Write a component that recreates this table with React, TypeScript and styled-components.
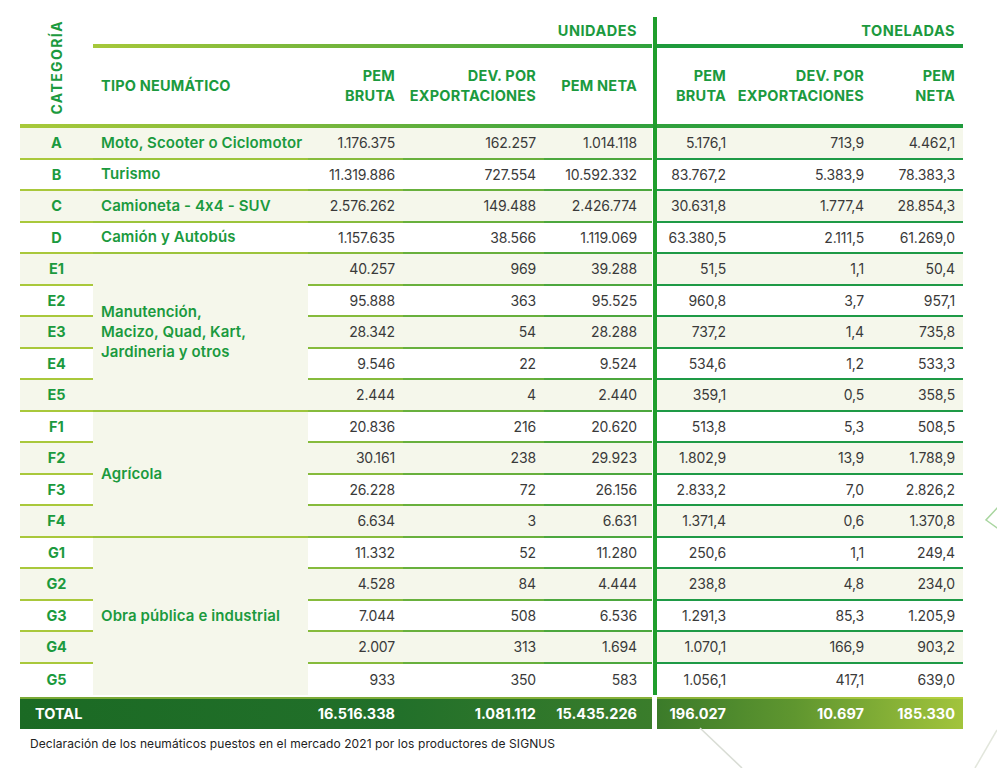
import React from 'react';
import styled, { createGlobalStyle } from 'styled-components';

const GREEN = '#1b9a3e';
const CREAM = '#f5f7eb';
const LINE: Record<number, string> = {
  1: '#a9c83b',
  2: '#9cc43b',
  3: '#86bb3c',
  4: '#68b03d',
  5: '#4ca73e',
  7: '#1e9a46',
  8: '#1e9a46',
  9: '#1e9a46',
};

const Global = createGlobalStyle`
  html, body { margin: 0; padding: 0; background: #fff; }
  body { font-family: Inter, "Noto Sans", "Liberation Sans", sans-serif; }
`;

const Page = styled.div`
  position: relative;
  width: 997px;
  height: 768px;
  overflow: hidden;
  box-sizing: border-box;
  padding: 17px 0 0 20px;
`;

const Deco = styled.svg`
  position: absolute;
  left: 0;
  top: 0;
  pointer-events: none;
`;

const Table = styled.div`
  position: relative;
  display: grid;
  width: 943px;
  grid-template-columns: 73px 215px 95px 141px 108px 5px 77px 138px 91px;
  grid-template-rows: 27px 4px 76px 4px repeat(18, 31.5px) 34px;
`;

const GroupHead = styled.div<{ $cols: string; $pad: number }>`
  grid-row: 1;
  grid-column: ${(p) => p.$cols};
  display: flex;
  align-items: center;
  justify-content: flex-end;
  padding-right: ${(p) => p.$pad}px;
  color: ${GREEN};
  font-weight: 700;
  font-size: 14.5px;
  letter-spacing: 0.5px;
`;

const TopLine = styled.div<{ $cols: string; $gradient: boolean }>`
  grid-row: 2;
  grid-column: ${(p) => p.$cols};
  background: ${(p) =>
    p.$gradient ? 'linear-gradient(to right, #a6c83a, #6cb23c 50%, #2fa23d)' : '#1e9a3c'};
`;

const CatHead = styled.div`
  grid-row: 1 / 4;
  grid-column: 1;
  display: flex;
  align-items: flex-start;
  justify-content: center;
  padding-top: 3px;
  span {
    writing-mode: vertical-rl;
    transform: rotate(180deg);
    color: ${GREEN};
    font-weight: 700;
    font-size: 14px;
    letter-spacing: 1.4px;
  }
`;

const ColHead = styled.div<{ $col: number; $pad: number; $left?: boolean }>`
  grid-row: 3;
  grid-column: ${(p) => p.$col};
  display: flex;
  align-items: center;
  justify-content: ${(p) => (p.$left ? 'flex-start' : 'flex-end')};
  text-align: ${(p) => (p.$left ? 'left' : 'right')};
  padding: ${(p) => (p.$left ? `0 0 0 ${p.$pad}px` : `0 ${p.$pad}px 0 0`)};
  color: ${GREEN};
  font-weight: 700;
  font-size: 14.5px;
  letter-spacing: 0.2px;
  line-height: 20px;
  white-space: nowrap;
`;

const HeadRule = styled.div`
  grid-row: 4;
  grid-column: 1 / -1;
  background: linear-gradient(to right, #a8c93a 0%, #7cb83c 30%, #34a23d 62%, #1e9a3c 100%);
`;

const Divider = styled.div`
  grid-row: 1 / 23;
  grid-column: 6;
  justify-self: center;
  width: 4px;
  background: #1f9e2c;
  z-index: 2;
`;

const Cell = styled.div<{ $row: number; $col: number; $span?: number; $alt: boolean; $last: boolean }>`
  grid-row: ${(p) => p.$row} / span ${(p) => p.$span || 1};
  grid-column: ${(p) => p.$col};
  box-sizing: border-box;
  display: flex;
  align-items: center;
  background: ${(p) => (p.$alt ? CREAM : '#fff')};
  border-bottom: ${(p) => (p.$last ? 'none' : `2px solid ${LINE[p.$col]}`)};
`;

const CatCell = styled(Cell)`
  justify-content: center;
  color: ${GREEN};
  font-weight: 700;
  font-size: 14.5px;
`;

const TipoCell = styled(Cell)`
  padding-left: 8px;
  color: ${GREEN};
  font-weight: 600;
  font-size: 15px;
  line-height: 20px;
  letter-spacing: 0.1px;
  white-space: nowrap;
`;

const NumCell = styled(Cell)<{ $pad: number }>`
  justify-content: flex-end;
  padding-right: ${(p) => p.$pad}px;
  color: #3a3a3a;
  font-size: 14px;
  letter-spacing: -0.15px;
`;

const TotalBand = styled.div<{ $cols: string; $template: string; $bg: string }>`
  grid-row: 23;
  grid-column: ${(p) => p.$cols};
  margin-top: 2px;
  display: grid;
  grid-template-columns: ${(p) => p.$template};
  align-items: center;
  background: ${(p) => p.$bg};
  box-shadow: inset 0 2px 0 rgba(200, 220, 70, 0.55);
  color: #fff;
  font-weight: 700;
  font-size: 14.5px;
`;

const TotalCell = styled.div<{ $pad: number; $left?: boolean }>`
  text-align: ${(p) => (p.$left ? 'left' : 'right')};
  padding: ${(p) => (p.$left ? `0 0 0 ${p.$pad}px` : `0 ${p.$pad}px 0 0`)};
`;

const Footer = styled.div`
  margin-top: 8px;
  padding-left: 10px;
  font-size: 12px;
  line-height: 14px;
  color: #222;
  letter-spacing: 0.08px;
`;

type Row = [string, string, string, string, string, string, string, string];

const rows: Row[] = [
  ['A', '1.176.375', '162.257', '1.014.118', '5.176,1', '713,9', '4.462,1', 'Moto, Scooter o Ciclomotor'],
  ['B', '11.319.886', '727.554', '10.592.332', '83.767,2', '5.383,9', '78.383,3', 'Turismo'],
  ['C', '2.576.262', '149.488', '2.426.774', '30.631,8', '1.777,4', '28.854,3', 'Camioneta - 4x4 - SUV'],
  ['D', '1.157.635', '38.566', '1.119.069', '63.380,5', '2.111,5', '61.269,0', 'Camión y Autobús'],
  ['E1', '40.257', '969', '39.288', '51,5', '1,1', '50,4', ''],
  ['E2', '95.888', '363', '95.525', '960,8', '3,7', '957,1', ''],
  ['E3', '28.342', '54', '28.288', '737,2', '1,4', '735,8', ''],
  ['E4', '9.546', '22', '9.524', '534,6', '1,2', '533,3', ''],
  ['E5', '2.444', '4', '2.440', '359,1', '0,5', '358,5', ''],
  ['F1', '20.836', '216', '20.620', '513,8', '5,3', '508,5', ''],
  ['F2', '30.161', '238', '29.923', '1.802,9', '13,9', '1.788,9', ''],
  ['F3', '26.228', '72', '26.156', '2.833,2', '7,0', '2.826,2', ''],
  ['F4', '6.634', '3', '6.631', '1.371,4', '0,6', '1.370,8', ''],
  ['G1', '11.332', '52', '11.280', '250,6', '1,1', '249,4', ''],
  ['G2', '4.528', '84', '4.444', '238,8', '4,8', '234,0', ''],
  ['G3', '7.044', '508', '6.536', '1.291,3', '85,3', '1.205,9', ''],
  ['G4', '2.007', '313', '1.694', '1.070,1', '166,9', '903,2', ''],
  ['G5', '933', '350', '583', '1.056,1', '417,1', '639,0', ''],
];

const groups: { start: number; span: number; label: React.ReactNode }[] = [
  {
    start: 4,
    span: 5,
    label: (
      <>
        Manutención,
        <br />
        Macizo, Quad, Kart,
        <br />
        Jardineria y otros
      </>
    ),
  },
  { start: 9, span: 4, label: 'Agrícola' },
  { start: 13, span: 5, label: 'Obra pública e industrial' },
];

const numCols = [3, 4, 5, 7, 8, 9];
const numPad = (col: number) => (col === 5 ? 15 : 8);

export default function App() {
  const last = rows.length - 1;
  return (
    <>
      <Global />
      <Page>
        <Table>
          <CatHead>
            <span>CATEGORÍA</span>
          </CatHead>
          <GroupHead $cols="2 / 6" $pad={15}>UNIDADES</GroupHead>
          <GroupHead $cols="7 / 10" $pad={8}>TONELADAS</GroupHead>
          <TopLine $cols="2 / 6" $gradient />
          <TopLine $cols="7 / 10" $gradient={false} />

          <ColHead $col={2} $pad={8} $left>
            TIPO NEUMÁTICO
          </ColHead>
          <ColHead $col={3} $pad={8}>
            PEM
            <br />
            BRUTA
          </ColHead>
          <ColHead $col={4} $pad={8}>
            DEV. POR
            <br />
            EXPORTACIONES
          </ColHead>
          <ColHead $col={5} $pad={15}>PEM NETA</ColHead>
          <ColHead $col={7} $pad={8}>
            PEM
            <br />
            BRUTA
          </ColHead>
          <ColHead $col={8} $pad={8}>
            DEV. POR
            <br />
            EXPORTACIONES
          </ColHead>
          <ColHead $col={9} $pad={8}>
            PEM
            <br />
            NETA
          </ColHead>
          <HeadRule />
          <Divider />

          {rows.map((r, i) => {
            const gridRow = 5 + i;
            const alt = i % 2 === 0;
            const isLast = i === last;
            return (
              <React.Fragment key={r[0]}>
                <CatCell $row={gridRow} $col={1} $alt={alt} $last={isLast}>
                  {r[0]}
                </CatCell>
                {r[7] && (
                  <TipoCell $row={gridRow} $col={2} $alt={alt} $last={isLast}>
                    {r[7]}
                  </TipoCell>
                )}
                {numCols.map((c, j) => (
                  <NumCell key={c} $row={gridRow} $col={c} $alt={alt} $last={isLast} $pad={numPad(c)}>
                    {r[1 + j]}
                  </NumCell>
                ))}
              </React.Fragment>
            );
          })}

          {groups.map((g) => (
            <TipoCell
              key={g.start}
              $row={5 + g.start}
              $col={2}
              $span={g.span}
              $alt
              $last={g.start + g.span - 1 === last}
            >
              <div>{g.label}</div>
            </TipoCell>
          ))}

          <TotalBand
            $cols="1 / 6"
            $template="288px 95px 141px 108px"
            $bg="linear-gradient(to right, #1b6a24, #22702a 60%, #3a7d2b)"
          >
            <TotalCell $pad={15} $left>
              TOTAL
            </TotalCell>
            <TotalCell $pad={8}>16.516.338</TotalCell>
            <TotalCell $pad={8}>1.081.112</TotalCell>
            <TotalCell $pad={15}>15.435.226</TotalCell>
          </TotalBand>
          <TotalBand
            $cols="7 / 10"
            $template="77px 138px 91px"
            $bg="linear-gradient(to right, #3b7b2a, #5f962f 45%, #a2c43c)"
          >
            <TotalCell $pad={8}>196.027</TotalCell>
            <TotalCell $pad={8}>10.697</TotalCell>
            <TotalCell $pad={8}>185.330</TotalCell>
          </TotalBand>
        </Table>
        <Footer>Declaración de los neumáticos puestos en el mercado 2021 por los productores de SIGNUS</Footer>
        <Deco width="997" height="768" viewBox="0 0 997 768">
          <path d="M700 728 L742 768" stroke="#d8dcd4" strokeWidth="1.5" fill="none" />
          <path d="M1000 505 L986 520 L1000 530" stroke="#a9d6a0" strokeWidth="1.5" fill="none" />
          <path d="M997 730 L975 768" stroke="#e2e6dc" strokeWidth="1.5" fill="none" />
        </Deco>
      </Page>
    </>
  );
}
